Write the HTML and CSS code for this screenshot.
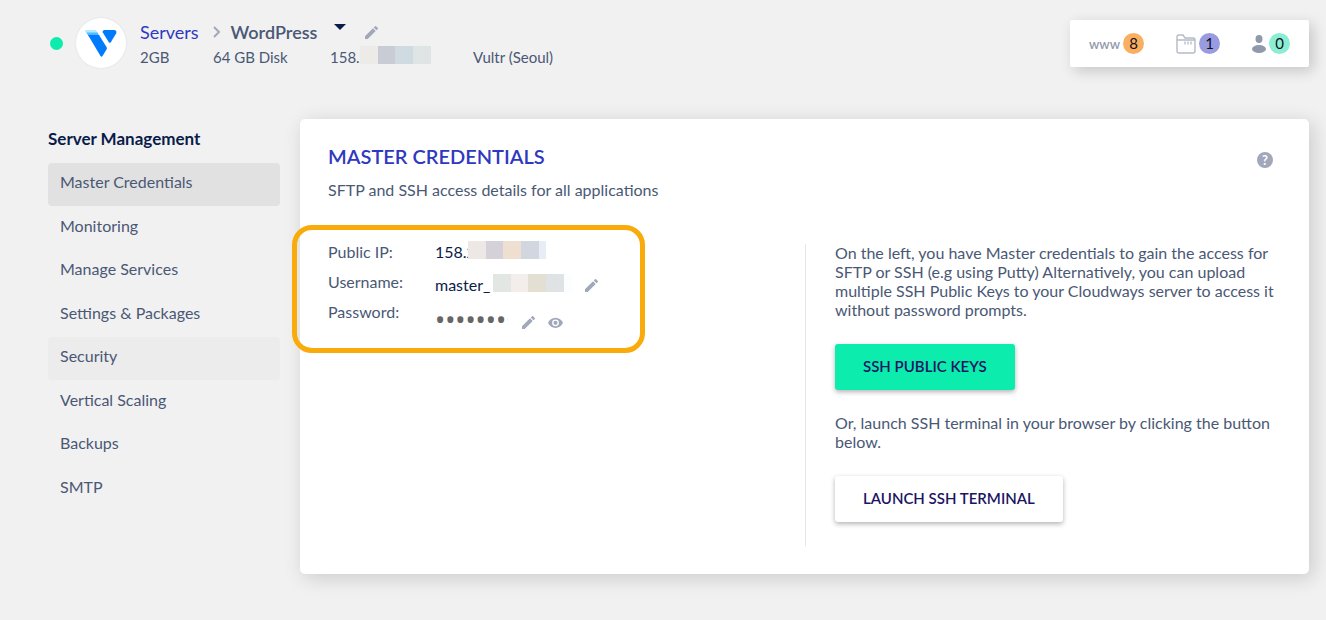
FILE: index.html
```
<!DOCTYPE html>
<html lang="en">
<head>
    <meta charset="UTF-8">
    <meta name="viewport" content="width=device-width, initial-scale=1.0">
    <title>Server Management</title>
    <link rel="stylesheet" href="styles.css">
</head>
<body>
    <svg class="sprite" aria-hidden="true">
        <symbol id="pencil" viewBox="3 3 18 18">
            <path d="M3 17.25V21h3.75L17.81 9.94l-3.75-3.75L3 17.25zM20.71 7.04a1 1 0 0 0 0-1.41l-2.34-2.34a1 1 0 0 0-1.41 0l-1.83 1.83 3.75 3.75 1.83-1.83z"/>
        </symbol>
    </svg>

    <header class="topbar">
        <span class="status-dot"></span>
        <span class="logo">
            <svg width="32" height="28" viewBox="0 0 32 28">
                <path fill="#b5e8ff" d="M1 1h8.500q1.500 0 2.300 1.300L13 4H1.500L.2 2.500Q-.2 1 1 1z"/>
                <path fill="#51b9ff" d="M1.300 3.500h11.200L14.500 7H3.500z"/>
                <path fill="#007bfc" d="M3 6h11l7.500 12q.8 1.300 0 2.600l-4 6.400q-1 1.300-2 0z"/>
                <path fill="#007bfc" d="M19 1h10.500q2.500.5 1.700 3.200l-5.400 9q-1 1.300-2 0l-6-9.700Q17 1.500 19 1z"/>
            </svg>
        </span>
        <div class="server">
            <div class="server-title">
                <a href="#">Servers</a>
                <svg class="chevron" width="8" height="12" viewBox="0 0 8 12"><path d="M1 1l5 5-5 5"/></svg>
                <h1>WordPress</h1>
                <button class="icon-btn caret" aria-label="Switch server"><svg width="12" height="6" viewBox="0 0 12 6"><path d="M0 0h12L6 6z"/></svg></button>
                <button class="icon-btn" aria-label="Rename server"><svg width="13" height="13"><use href="#pencil"/></svg></button>
            </div>
            <div class="server-info">
                <span>2GB</span>
                <span>64 GB Disk</span>
                <span class="masked">158.2<i class="mask mask-server"></i></span>
                <span>Vultr (Seoul)</span>
            </div>
        </div>
        <div class="stats">
            <a href="#" class="stat"><span class="www">www</span><span class="badge orange">8</span></a>
            <a href="#" class="stat">
                <svg width="20" height="20" viewBox="0 0 20 20" fill="none" stroke="#b4bac6" stroke-width="1.4">
                    <path d="M1 17V3q0-2 2-2h4l2 3h8q2 0 2 2v11q0 2-2 2H3q-2 0-2-2zM1 6h18"/>
                    <path d="M8 9h9" stroke-width="3" stroke-dasharray="2 1" stroke="#cdd1d9"/>
                </svg>
                <span class="badge purple">1</span>
            </a>
            <a href="#" class="stat">
                <svg width="14" height="18" viewBox="0 0 14 18" fill="#9099ab">
                    <ellipse cx="7" cy="4" rx="3.5" ry="4"/>
                    <ellipse cx="7" cy="14" rx="7" ry="4"/>
                </svg>
                <span class="badge green">0</span>
            </a>
        </div>
    </header>

    <div class="layout">
        <nav class="sidebar">
            <h2>Server Management</h2>
            <ul>
                <li><a href="#" class="active">Master Credentials</a></li>
                <li><a href="#">Monitoring</a></li>
                <li><a href="#">Manage Services</a></li>
                <li><a href="#">Settings &amp; Packages</a></li>
                <li><a href="#" class="hovered">Security</a></li>
                <li><a href="#">Vertical Scaling</a></li>
                <li><a href="#">Backups</a></li>
                <li><a href="#">SMTP</a></li>
            </ul>
        </nav>

        <main class="card">
            <div class="card-head">
                <div>
                    <h2>MASTER CREDENTIALS</h2>
                    <p>SFTP and SSH access details for all applications</p>
                </div>
                <button class="help" aria-label="Help">?</button>
            </div>
            <div class="columns">
                <div class="left">
                    <div class="credentials">
                        <div class="row">
                            <span class="label">Public IP:</span>
                            <span class="value masked">158.2<i class="mask mask-ip"></i></span>
                        </div>
                        <div class="row">
                            <span class="label">Username:</span>
                            <span class="value lower">master_<i class="mask mask-user"></i></span>
                            <button class="icon-btn lower" aria-label="Edit username"><svg width="13" height="13"><use href="#pencil"/></svg></button>
                        </div>
                        <div class="row">
                            <label class="label" for="password">Password:</label>
                            <input id="password" type="password" value="mastersecret" readonly>
                            <button class="icon-btn lowest" aria-label="Edit password"><svg width="13" height="13"><use href="#pencil"/></svg></button>
                            <button class="icon-btn lowest" aria-label="Show password">
                                <svg width="15" height="11" viewBox="1 4 22 15"><path d="M12 4.5C7 4.5 2.73 7.61 1 12c1.73 4.39 6 7.5 11 7.5s9.27-3.11 11-7.5c-1.73-4.39-6-7.5-11-7.5zM12 17a5 5 0 1 1 0-10 5 5 0 0 1 0 10zm0-8a3 3 0 1 0 0 6 3 3 0 0 0 0-6z"/></svg>
                            </button>
                        </div>
                    </div>
                </div>
                <div class="right">
                    <p>On the left, you have Master credentials to gain the access for SFTP or SSH (e.g using Putty) Alternatively, you can upload multiple SSH Public Keys to your Cloudways server to access it without password prompts.</p>
                    <button class="btn primary">SSH PUBLIC KEYS</button>
                    <p>Or, launch SSH terminal in your browser by clicking the button below.</p>
                    <button class="btn">LAUNCH SSH TERMINAL</button>
                </div>
            </div>
        </main>
    </div>
</body>
</html>
```
FILE: styles.css
```
* {
    box-sizing: border-box;
}
body {
    margin: 0;
    background-color: #f1f1f1;
    color: #4a5875;
    font-family: Lato, "Liberation Sans", sans-serif;
    font-size: 16px;
    line-height: 20px;
}
h1, h2, p, ul {
    margin: 0;
    padding: 0;
}
a {
    color: inherit;
    text-decoration: none;
}
.sprite {
    display: none;
}

/* Header */
.topbar {
    display: flex;
    align-items: flex-start;
    padding: 18px 17px 0 50px;
    height: 119px;
}
.status-dot {
    width: 13px;
    height: 13px;
    margin: 19px 13px 0 0;
    border-radius: 50%;
    background-color: #0cecac;
}
.logo {
    display: flex;
    align-items: center;
    justify-content: center;
    width: 50px;
    height: 50px;
    margin-right: 14px;
    border-radius: 50%;
    background-color: #fff;
    box-shadow: 0 0 2px rgba(0, 0, 0, 0.1);
}
.server-title {
    display: flex;
    align-items: center;
    height: 28px;
    font-size: 18px;
}
.server-title a {
    color: #2f39bf;
}
.chevron {
    margin: 0 10px 0 14px;
    fill: none;
    stroke: #a0a8b9;
    stroke-width: 2;
}
.server-title h1 {
    font-size: 18px;
    font-weight: 600;
}
.icon-btn {
    display: flex;
    padding: 0;
    border: 0;
    background: none;
    cursor: pointer;
    fill: #a0a8b9;
}
.caret {
    margin: 0 19px 10px 17px;
    fill: #0a1c4a;
}
.server-info {
    display: grid;
    grid-template-columns: 73px 117px 143px auto;
    font-size: 15px;
    line-height: 22px;
}
.stats {
    display: flex;
    align-items: center;
    justify-content: space-between;
    width: 239px;
    height: 47px;
    margin: 2px 0 0 auto;
    padding: 0 19px;
    border-radius: 2px;
    background-color: #fff;
    box-shadow: 4px 4px 14px rgba(0, 0, 0, 0.18);
}
.stat {
    display: flex;
    align-items: center;
    gap: 3px;
}
.www {
    color: #9099ab;
    font-size: 13px;
    font-weight: 600;
}
.badge {
    width: 21px;
    height: 21px;
    border-radius: 50%;
    color: #101020;
    font-size: 15px;
    line-height: 21px;
    text-align: center;
}
.orange {
    background-color: #f9ae60;
}
.purple {
    background-color: #999be0;
}
.green {
    background-color: #8bedd3;
}

/* Blurred out values */
.masked {
    display: flex;
    align-items: center;
}
.mask {
    flex: none;
    height: 18px;
}
.mask-server {
    width: 71px;
    margin: -4px 0 0 -8px;
    background: linear-gradient(to right, #ecebe8 18px, #c9ccd5 18px 35px, #cfdbe1 35px 53px, #dfe4e4 53px);
}
.mask-ip {
    width: 78px;
    margin: -5px 0 0 -8px;
    background: linear-gradient(to right, #ede7e5 18px, #d4d2d8 18px 35px, #efdfd0 35px 53px, #d2d6df 53px 71px, #e6edf5 71px);
}
.mask-user {
    width: 79px;
    margin: -5px 0 0 3px;
    background: linear-gradient(to right, #e2e7e4 18px, #f3eeeb 18px 35px, #e4dfd3 35px 53px, #e0e3e6 53px 71px, #fafeff 71px);
}

/* Sidebar */
.layout {
    display: flex;
    align-items: flex-start;
    gap: 20px;
    padding: 0 17px 46px 48px;
}
.sidebar {
    flex: 0 0 232px;
    padding-top: 10px;
}
.sidebar h2 {
    margin-bottom: 14px;
    color: #0a1c4a;
    font-size: 17px;
}
.sidebar ul {
    display: grid;
    grid-auto-rows: 1fr;
    height: 348px;
    list-style: none;
}
.sidebar a {
    display: block;
    height: 43px;
    padding: 9px 12px;
    border-radius: 4px;
}
.sidebar .active {
    background-color: #e1e1e1;
}
.sidebar .hovered {
    background-color: #ececec;
}

/* Card */
.card {
    flex: 1;
    padding: 27px 28px 28px;
    border-radius: 5px;
    background-color: #fff;
    box-shadow: 4px 4px 20px rgba(0, 0, 0, 0.16);
}
.card-head {
    display: flex;
    justify-content: space-between;
    margin-bottom: 25px;
}
.card-head h2 {
    margin-bottom: 14px;
    color: #2f39bf;
    font-size: 20px;
    font-weight: 600;
}
.help {
    width: 16px;
    height: 16px;
    margin: 6px 8px 0 0;
    padding: 0;
    border: 0;
    border-radius: 50%;
    background-color: #a0a8b9;
    color: #fff;
    font: 700 13px/16px Lato, sans-serif;
}
.columns {
    display: flex;
}
.left {
    flex: 0 0 477px;
}
.credentials {
    width: 353px;
    height: 128px;
    margin-left: -36px;
    padding: 7px 31px;
    border: 5px solid #f9ab0b;
    border-radius: 20px;
}
.row {
    display: flex;
    align-items: center;
    height: 30px;
}
.label {
    width: 107px;
}
.value {
    display: flex;
    align-items: center;
    width: 150px;
    color: #0a1c4a;
}
.lower {
    padding-top: 6px;
}
.lowest {
    margin-right: 13px;
    padding-top: 20px;
}
.row input {
    width: 73px;
    height: 30px;
    margin-right: 14px;
    padding: 14px 0 0;
    border: 0;
    outline: none;
    background: none;
    color: #666;
    font: 27px/16px "Noto Sans", sans-serif;
}
.right {
    flex: 1;
    margin-top: 19px;
    padding: 0 0 24px 29px;
    border-left: 1px solid #e6e6ea;
}
.right p {
    margin-top: -1px;
    line-height: 19px;
}
.btn {
    height: 46px;
    margin: 25px 0 24px;
    padding: 0 28px 2px;
    border: 0;
    border-radius: 3px;
    background-color: #fff;
    color: #1b1464;
    font: 600 15px Lato, sans-serif;
    box-shadow: 0 2px 5px rgba(0, 0, 0, 0.3);
    cursor: pointer;
}
.btn.primary {
    background-color: #0cecac;
}
.btn:last-child {
    display: block;
    margin-bottom: 0;
}
```
